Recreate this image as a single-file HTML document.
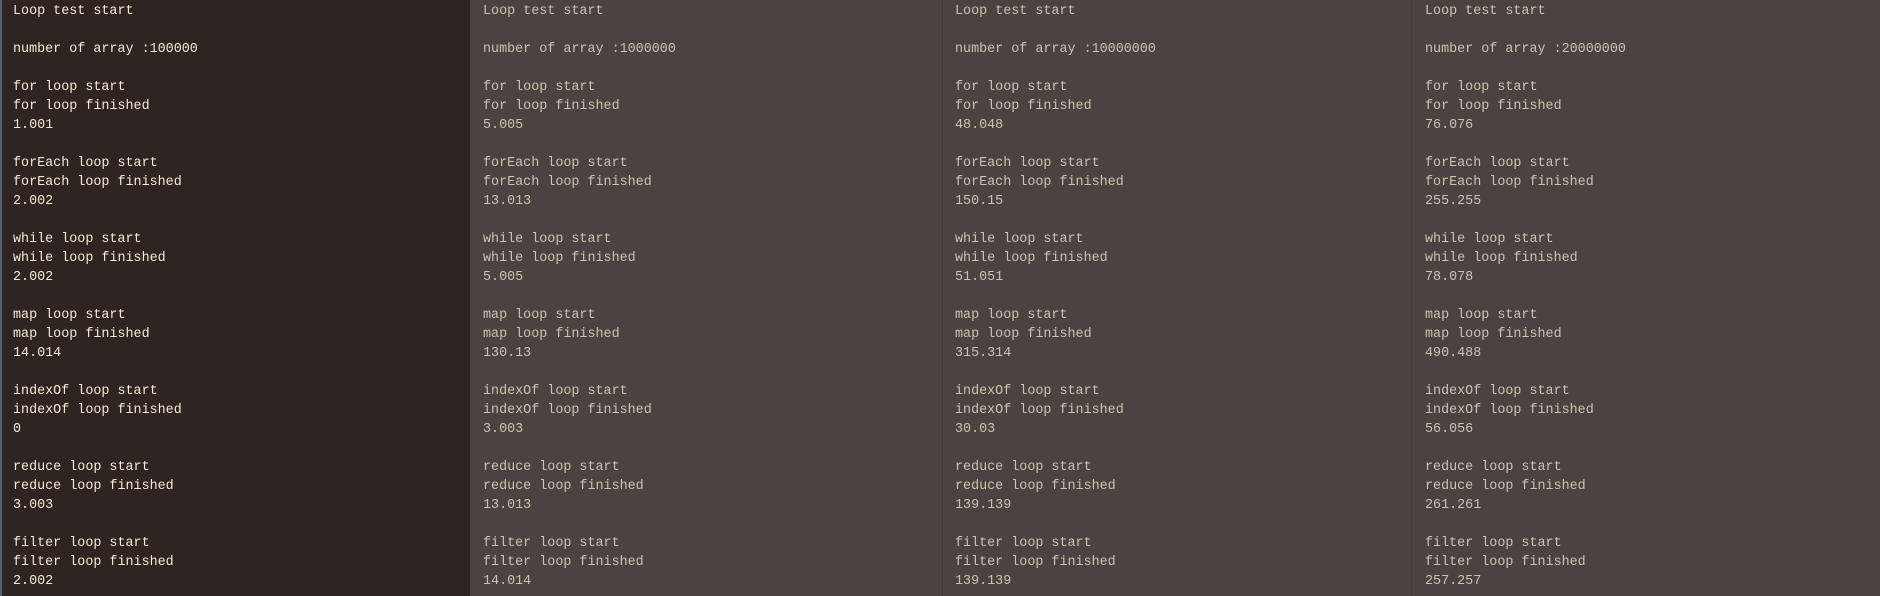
<!DOCTYPE html>
<html><head><meta charset="utf-8"><style>
html,body{margin:0;padding:0;width:1880px;height:596px;overflow:hidden;background:#4b4341}
.c{position:absolute;top:0;height:596px;width:470px;box-sizing:border-box;padding:2px 0 0 13px;
font-family:"Liberation Mono",monospace;font-size:13.4px;line-height:19px;white-space:pre;color:#cbc3ad;background:#4b4341}
#a{left:0;background:#2e2422;color:#f2ead0;border-left:2px solid #5a6070;padding-left:11px}
#b{left:470px}
#c{left:942px;width:469px;border-left:1px solid #433b39;padding-left:12px}
#d{left:1411px;border-left:1px solid #433b39;padding-left:13px}
</style></head><body>
<div class="c" id="a">Loop test start

number of array :100000

for loop start
for loop finished
1.001

forEach loop start
forEach loop finished
2.002

while loop start
while loop finished
2.002

map loop start
map loop finished
14.014

indexOf loop start
indexOf loop finished
0

reduce loop start
reduce loop finished
3.003

filter loop start
filter loop finished
2.002</div>
<div class="c" id="b">Loop test start

number of array :1000000

for loop start
for loop finished
5.005

forEach loop start
forEach loop finished
13.013

while loop start
while loop finished
5.005

map loop start
map loop finished
130.13

indexOf loop start
indexOf loop finished
3.003

reduce loop start
reduce loop finished
13.013

filter loop start
filter loop finished
14.014</div>
<div class="c" id="c">Loop test start

number of array :10000000

for loop start
for loop finished
48.048

forEach loop start
forEach loop finished
150.15

while loop start
while loop finished
51.051

map loop start
map loop finished
315.314

indexOf loop start
indexOf loop finished
30.03

reduce loop start
reduce loop finished
139.139

filter loop start
filter loop finished
139.139</div>
<div class="c" id="d">Loop test start

number of array :20000000

for loop start
for loop finished
76.076

forEach loop start
forEach loop finished
255.255

while loop start
while loop finished
78.078

map loop start
map loop finished
490.488

indexOf loop start
indexOf loop finished
56.056

reduce loop start
reduce loop finished
261.261

filter loop start
filter loop finished
257.257</div>
</body></html>
